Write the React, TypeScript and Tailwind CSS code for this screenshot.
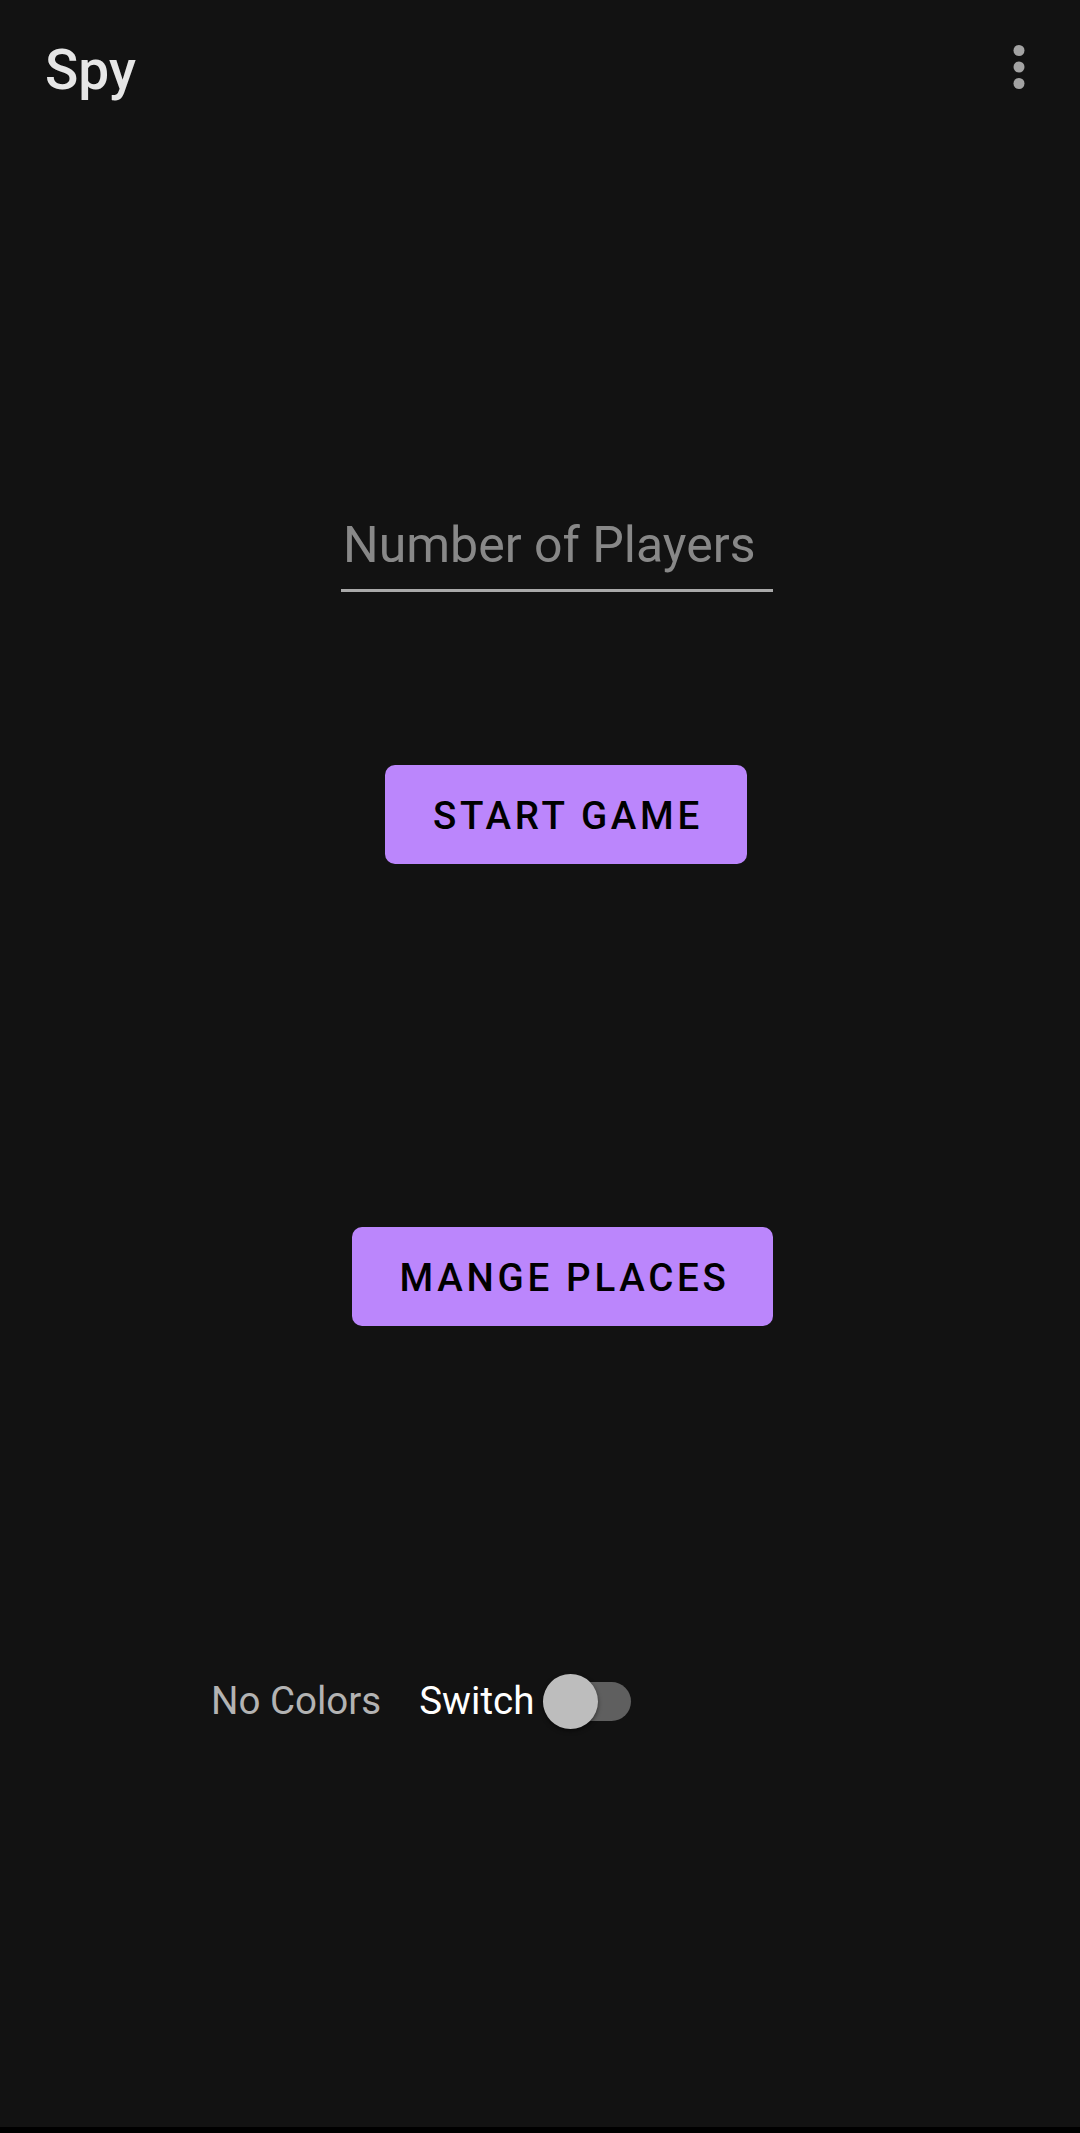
const font = { fontFamily: "Roboto, 'Noto Sans', sans-serif" };

const MoreIcon = () => (
  <svg width="66" height="66" viewBox="0 0 66 66" className="mt-[34px]">
    <circle cx="33" cy="16.5" r="5.5" fill="#a3a3a3" />
    <circle cx="33" cy="33" r="5.5" fill="#a3a3a3" />
    <circle cx="33" cy="49.5" r="5.5" fill="#a3a3a3" />
  </svg>
);

const PurpleButton = ({ label, width, left }: { label: string; width: string; left: string }) => (
  <button
    className={`${width} ${left} h-[99px] rounded-[10px] bg-[#bb86fc] text-black text-[38.5px] font-medium leading-none tracking-[3.7px] uppercase flex items-center justify-center pt-[3px] pl-[4px]`}
  >
    {label}
  </button>
);

export default function App() {
  return (
    <div className="w-full h-[2133px] bg-[#121212] flex flex-col" style={font}>
      <header className="h-[134px] flex items-start justify-between pl-[45px] pr-[28px]">
        <h1 className="mt-[43px] text-[55px] leading-none text-[#e6e6e6] font-medium">Spy</h1>
        <MoreIcon />
      </header>

      <main className="flex flex-col items-start">
        <div className="ml-[341px] mt-[382px] w-[432px] flex flex-col">
          <input
            type="text"
            placeholder="Number of Players"
            className="h-[58px] w-full bg-transparent outline-none pl-[2px] text-[50px] text-white placeholder:text-[#888888]"
            style={font}
          />
          <div className="mt-[15px] h-[3px] bg-[#a9a9a9]" />
        </div>

        <div className="mt-[173px]">
          <PurpleButton label="Start Game" width="w-[362px]" left="ml-[385px]" />
        </div>

        <div className="mt-[363px]">
          <PurpleButton label="Mange Places" width="w-[421px]" left="ml-[352px]" />
        </div>

        <div className="mt-[348px] ml-[211px] h-[55px] flex items-center">
          <span className="text-[38.5px] leading-none text-[#b3b3b3]">No Colors</span>
          <span className="ml-[38px] text-[38.5px] leading-none text-white">Switch</span>
          <div className="ml-[9px] relative w-[88px] h-[55px]">
            <div className="absolute right-0 top-[8px] w-[88px] h-[39px] rounded-full bg-[#5f5f5f]" />
            <div className="absolute left-0 top-0 w-[55px] h-[55px] rounded-full bg-[#bdbdbd] shadow-[0_2px_4px_rgba(0,0,0,0.5)]" />
          </div>
        </div>
      </main>

      <div className="mt-auto h-[6px] bg-black" />
    </div>
  );
}
